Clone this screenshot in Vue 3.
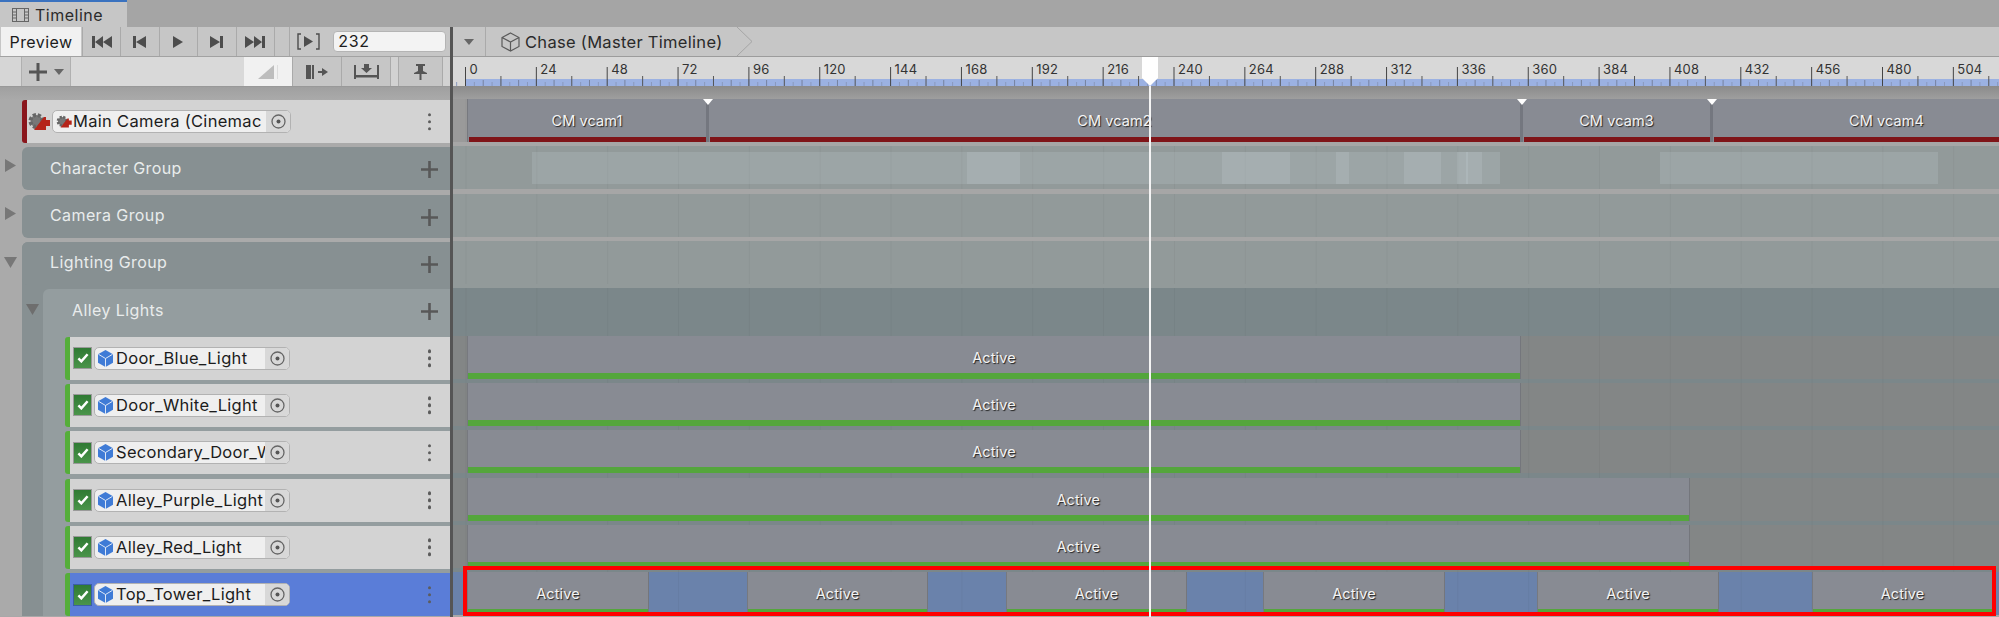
<script setup>
const ORIGIN = 12.5
const PX_PER_FRAME = 70.85 / 24

const frameX = (f) => ORIGIN + f * PX_PER_FRAME
const px = (x) => x - 453

const labels = []
for (let f = 0; f <= 504; f += 24) labels.push(f)

const ticks = []
for (let f = -3; f <= 525; f += 3) {
  let top = 25
  let color = '#8a99bd'
  if (f % 24 === 0) { top = 10; color = '#444' }
  else if (f % 12 === 0) { top = 19; color = '#555' }
  else if (f % 6 === 0) { top = 23; color = '#76829f' }
  ticks.push({ x: frameX(f), top, color })
}

const camClips = [
  { name: 'CM vcam1', from: 467, to: 706, first: true },
  { name: 'CM vcam2', from: 706, to: 1520, marker: true },
  { name: 'CM vcam3', from: 1520, to: 1710, marker: true },
  { name: 'CM vcam4', from: 1710, to: 2060, marker: true },
]

const ghosts = [
  [532, 1500], [1660, 1938],
  [967, 1020], [1222, 1290], [1336, 1349], [1404, 1441], [1457, 1482], [1466, 1468],
]

const lights = [
  { name: 'Door_Blue_Light', clips: [[467, 1521]] },
  { name: 'Door_White_Light', clips: [[467, 1521]] },
  { name: 'Secondary_Door_W', clips: [[467, 1521]] },
  { name: 'Alley_Purple_Light', clips: [[467, 1689.5]] },
  { name: 'Alley_Red_Light', clips: [[467, 1689.5]] },
  {
    name: 'Top_Tower_Light',
    selected: true,
    clips: [[467, 649], [747, 928], [1006, 1187], [1263, 1445], [1537, 1719], [1812, 1993]],
  },
]

const spanStyle = (from, to) => ({ left: px(from) + 'px', width: to - from + 'px' })
</script>

<template>
  <div class="app">
    <div class="tabbar">
      <div class="tab">
        <svg width="17" height="14" viewBox="0 0 17 14" class="film">
          <rect x="0.5" y="0.5" width="16" height="13" fill="none" stroke="#666" />
          <path d="M4.5 0V14M12.5 0V14M0 4H4M0 7H4M0 10H4M13 4H17M13 7H17M13 10H17" stroke="#666" fill="none" />
        </svg>
        <span>Timeline</span>
      </div>
    </div>

    <div class="body">
      <div class="left">
        <div class="tools-a">
          <div class="preview">Preview</div>
          <div class="tbtn">
            <svg width="20" height="12" viewBox="0 0 20 12"><path d="M0 0H3V12H0ZM3 6L11 0V12ZM11 6L20 0V12Z" fill="#4d4d4d" /></svg>
          </div>
          <div class="tbtn">
            <svg width="13" height="12" viewBox="0 0 13 12"><path d="M0 0H3V12H0ZM3 6L13 0V12Z" fill="#4d4d4d" /></svg>
          </div>
          <div class="tbtn">
            <svg width="10" height="12" viewBox="0 0 10 12"><path d="M0 0L10 6L0 12Z" fill="#4d4d4d" /></svg>
          </div>
          <div class="tbtn">
            <svg width="13" height="12" viewBox="0 0 13 12"><path d="M13 0H10V12H13ZM10 6L0 0V12Z" fill="#4d4d4d" /></svg>
          </div>
          <div class="tbtn">
            <svg width="20" height="12" viewBox="0 0 20 12"><path d="M20 0H17V12H20ZM17 6L9 0V12ZM9 6L0 0V12Z" fill="#4d4d4d" /></svg>
          </div>
          <div class="tspacer"></div>
          <div class="tbtn">
            <svg width="23" height="17" viewBox="0 0 23 17"><path d="M4 1H1V16H4M19 1H22V16H19" fill="none" stroke="#4d4d4d" stroke-width="1.4" /><path d="M7 3L16 8.500L7 14Z" fill="#4d4d4d" /></svg>
          </div>
          <div class="frame-input">232</div>
        </div>

        <div class="tools-b">
          <div class="add">
            <svg width="18" height="18" viewBox="0 0 18 18"><path d="M9 0V18M0 9H18" stroke="#555" stroke-width="3" /></svg>
            <svg width="10" height="6" viewBox="0 0 10 6"><path d="M0 0H10L5 6Z" fill="#666" /></svg>
          </div>
          <div class="tfill"></div>
          <div class="slope">
            <svg width="21" height="14" viewBox="0 0 21 14"><path d="M0 14L16 0V14Z" fill="#bdbdbd" /><path d="M19.500 0V14" stroke="#ddd" /></svg>
          </div>
          <div class="bbtn">
            <svg width="22" height="14" viewBox="0 0 22 14"><path d="M0 0H5V14H0ZM6 0H8V14H6ZM12 6H16V3L22 7L16 11V8H12Z" fill="#555" /></svg>
          </div>
          <div class="bbtn">
            <svg width="25" height="15" viewBox="0 0 25 15"><path d="M0 1H2V15H0ZM23 1H25V15H23ZM2 11H23V13.500H2ZM10 0H15V4H18L12.500 9L7 4H10Z" fill="#555" /></svg>
          </div>
          <div class="bgap"></div>
          <div class="bbtn pin">
            <svg width="13" height="16" viewBox="0 0 13 16"><path d="M2 0H11V2H9V7L13 9V10H0V9L4 7V2H2ZM5.500 10H7.500V16H5.500Z" fill="#555" /></svg>
          </div>
          <div class="bend"></div>
        </div>

        <div class="shade-left"></div>

        <div class="tracks">
          <div class="clip-track camera-track">
            <svg class="gear" width="22" height="20" viewBox="0 0 22 20">
              <circle cx="8.500" cy="9" r="6" fill="#777" stroke="#666" stroke-width="4" stroke-dasharray="3 1.800" />
              <path d="M6 18L16 5H18V8H22V14H18V18Z" fill="#b5251a" />
            </svg>
            <div class="field">
              <div class="field-main">
                <svg width="16" height="14" viewBox="0 0 22 20" class="field-icon">
                  <circle cx="8.500" cy="9" r="6" fill="#777" stroke="#666" stroke-width="4" stroke-dasharray="3 1.800" />
                  <path d="M6 18L16 5H18V8H22V14H18V18Z" fill="#b5251a" />
                </svg>
                <span class="field-name">Main Camera (Cinemac</span>
              </div>
              <div class="field-target">
                <svg width="15" height="15" viewBox="0 0 15 15"><circle cx="7.500" cy="7.500" r="6.500" fill="none" stroke="#666" stroke-width="1.300" /><circle cx="7.500" cy="7.500" r="2" fill="#555" /></svg>
              </div>
            </div>
            <div class="dots"><i></i><i></i><i></i></div>
          </div>

          <div class="group">
            <svg class="fold" width="11" height="13" viewBox="0 0 11 13"><path d="M0 0L11 6.500L0 13Z" fill="#777" /></svg>
            <span>Character Group</span>
            <svg class="plus" width="17" height="17" viewBox="0 0 17 17"><path d="M8.500 0V17M0 8.500H17" stroke="#585858" stroke-width="2.600" /></svg>
          </div>

          <div class="group">
            <svg class="fold" width="11" height="13" viewBox="0 0 11 13"><path d="M0 0L11 6.500L0 13Z" fill="#777" /></svg>
            <span>Camera Group</span>
            <svg class="plus" width="17" height="17" viewBox="0 0 17 17"><path d="M8.500 0V17M0 8.500H17" stroke="#585858" stroke-width="2.600" /></svg>
          </div>

          <div class="group-open">
            <div class="group">
              <svg class="fold down" width="13" height="11" viewBox="0 0 13 11"><path d="M0 0H13L6.500 11Z" fill="#777" /></svg>
              <span>Lighting Group</span>
              <svg class="plus" width="17" height="17" viewBox="0 0 17 17"><path d="M8.500 0V17M0 8.500H17" stroke="#585858" stroke-width="2.600" /></svg>
            </div>

            <div class="subgroup">
              <div class="group sub">
                <svg class="fold down" width="13" height="11" viewBox="0 0 13 11"><path d="M0 0H13L6.500 11Z" fill="#6e6e6e" /></svg>
                <span>Alley Lights</span>
                <svg class="plus" width="17" height="17" viewBox="0 0 17 17"><path d="M8.500 0V17M0 8.500H17" stroke="#585858" stroke-width="2.600" /></svg>
              </div>

              <div
                v-for="light in lights"
                :key="light.name"
                class="clip-track light-track"
                :class="{ selected: light.selected }"
              >
                <div class="check">
                  <svg width="12" height="10" viewBox="0 0 14 12"><path d="M1.500 6.500L5 10L12.500 1.500" fill="none" stroke="#fff" stroke-width="3" /></svg>
                </div>
                <div class="field">
                  <div class="field-main">
                    <svg width="15" height="17" viewBox="0 0 16 18" class="cube">
                      <path d="M8 0L16 4.500V13.500L8 18L0 13.500V4.500Z" fill="#3f7bd6" />
                      <path d="M0.500 4.500L8 9L15.500 4.500M8 9V18" fill="none" stroke="#e8eef8" stroke-width="1" />
                    </svg>
                    <span class="field-name">{{ light.name }}</span>
                  </div>
                  <div class="field-target">
                    <svg width="15" height="15" viewBox="0 0 15 15"><circle cx="7.500" cy="7.500" r="6.500" fill="none" stroke="#666" stroke-width="1.300" /><circle cx="7.500" cy="7.500" r="2" fill="#555" /></svg>
                  </div>
                </div>
                <div class="dots"><i></i><i></i><i></i></div>
              </div>
            </div>
          </div>
        </div>
      </div>

      <div class="divider"></div>

      <div class="right">
        <div class="crumbs">
          <div class="crumb-menu">
            <svg width="10" height="6" viewBox="0 0 10 6"><path d="M0 0H10L5 6Z" fill="#666" /></svg>
          </div>
          <div class="crumb">
            <svg width="19" height="20" viewBox="0 0 19 20">
              <path d="M9.500 1L18 5.500V14.500L9.500 19L1 14.500V5.500ZM1 5.500L9.500 10L18 5.500M9.500 10V19" fill="none" stroke="#5a5a5a" stroke-width="1.200" />
            </svg>
            <span>Chase (Master Timeline)</span>
            <svg class="chevron" width="16" height="29" viewBox="0 0 16 29"><path d="M0 0L15 14.500L0 29" fill="none" stroke="#a5a5a5" stroke-width="1" /></svg>
          </div>
        </div>

        <div class="ruler">
          <div class="ruler-band"></div>
          <svg class="ruler-ticks" width="1546" height="29">
            <line
              v-for="t in ticks"
              :key="t.x"
              :x1="t.x"
              :x2="t.x"
              :y1="t.top"
              y2="29"
              :stroke="t.color"
              stroke-width="1"
            />
          </svg>
          <span
            v-for="f in labels"
            :key="f"
            class="ruler-label"
            :style="{ left: frameX(f) + 4 + 'px' }"
          >{{ f }}</span>
        </div>

        <div class="shade-right"></div>

        <div class="lanes">
          <div class="lane cam-lane">
            <div
              v-for="c in camClips"
              :key="c.name"
              class="clip cam"
              :class="{ first: c.first }"
              :style="spanStyle(c.from, c.to)"
            >
              <span>{{ c.name }}</span>
              <i v-if="c.marker" class="marker"></i>
            </div>
          </div>

          <div class="lane group-lane">
            <div
              v-for="(g, i) in ghosts"
              :key="i"
              class="ghost"
              :style="spanStyle(g[0], g[1])"
            ></div>
          </div>

          <div class="lane group-lane"></div>

          <div class="lanes-open">
            <div class="lane group-lane"></div>

            <div class="lanes-alley">
              <div class="lane alley-lane"></div>
              <div
                v-for="light in lights"
                :key="light.name"
                class="lane light-lane"
                :class="{ selected: light.selected }"
              >
                <div
                  v-for="c in light.clips"
                  :key="c[0]"
                  class="clip active"
                  :style="spanStyle(c[0], c[1])"
                >
                  <span>Active</span>
                </div>
              </div>
            </div>
          </div>
        </div>

        <div class="selection-box"></div>

        <div class="playhead">
          <svg width="16" height="29" viewBox="0 0 16 29"><path d="M0 0H16V21L8 29L0 21Z" fill="#fff" /></svg>
          <div class="playhead-line"></div>
        </div>
      </div>
    </div>
  </div>
</template>

<style scoped>
.app {
  width: 1999px;
  height: 617px;
  overflow: hidden;
  display: flex;
  flex-direction: column;
  background: #a8a8a8;
  font-family: Inter, "Noto Sans", sans-serif;
  font-size: 16px;
  color: #1c1c1c;
}

.tabbar {
  height: 27px;
  flex: none;
  display: flex;
  background: #a5a5a5;
}
.tab {
  height: 25px;
  border-top: 2px solid #3a72bf;
  background: #c6c6c6;
  display: flex;
  align-items: center;
  padding-left: 12px;
  gap: 6px;
  color: #2b2b2b;
  letter-spacing: 0.5px;
  width: 115px;
}
.film {
  flex: none;
}

.body {
  flex: 1;
  display: flex;
  position: relative;
  min-height: 0;
}

.left {
  width: 450px;
  flex: none;
  display: flex;
  flex-direction: column;
}

.tools-a {
  height: 30px;
  flex: none;
  display: flex;
  background: #c6c6c6;
  border-bottom: 1px solid #a2a2a2;
  box-sizing: border-box;
}
.preview {
  width: 80px;
  margin-left: 1px;
  background: #f1f1f1;
  display: flex;
  align-items: center;
  justify-content: center;
  margin-right: 1px;
  letter-spacing: 0.4px;
}
.tbtn {
  width: 38px;
  border-left: 1px solid #aaa;
  display: flex;
  align-items: center;
  justify-content: center;
  box-sizing: border-box;
  margin-right: 0.4px;
}
.tspacer {
  width: 15px;
  border-left: 1px solid #aaa;
  box-sizing: border-box;
}
.frame-input {
  width: 113px;
  height: 21px;
  margin: 4px 0 0 6px;
  border-radius: 4px;
  border: 1px solid #b4b4b4;
  background: #f3f3f3;
  box-sizing: border-box;
  padding-left: 4px;
  line-height: 19px;
  font-size: 16px;
  letter-spacing: 0.6px;
}

.tools-b {
  height: 30px;
  flex: none;
  display: flex;
  background: #d6d6d6;
  border-bottom: 1px solid #999;
  box-sizing: border-box;
}
.add {
  width: 50px;
  margin-left: 21px;
  background: #c6c6c6;
  border-left: 1px solid #b0b0b0;
  border-right: 1px solid #b0b0b0;
  box-sizing: border-box;
  display: flex;
  align-items: center;
  gap: 7px;
  padding-left: 7px;
}
.tfill {
  width: 173px;
  background: #d9d9d9;
}
.slope {
  width: 48px;
  background: #f1f1f1;
  display: flex;
  align-items: center;
  justify-content: flex-end;
  padding-right: 13px;
  box-sizing: border-box;
}
.bbtn {
  width: 49px;
  background: #c6c6c6;
  border-left: 1px solid #aaa;
  box-sizing: border-box;
  display: flex;
  align-items: center;
  justify-content: center;
}
.bgap {
  width: 8px;
  background: #d2d2d2;
  border-left: 1px solid #aaa;
  box-sizing: border-box;
}
.pin {
  width: 44px;
}
.bend {
  flex: 1;
  background: #d2d2d2;
  border-left: 1px solid #aaa;
}

.shade-left {
  height: 13px;
  flex: none;
  background: linear-gradient(#a0a0a0, #aaaaaa);
}

.tracks {
  display: flex;
  flex-direction: column;
  gap: 4.33px;
  background: #aaaaaa;
}

.clip-track {
  height: 43px;
  flex: none;
  margin-left: 22px;
  background: #d3d3d3;
  border-left: 5px solid #8a161c;
  border-radius: 3px 0 0 3px;
  box-sizing: border-box;
  display: flex;
  align-items: center;
  position: relative;
}
.gear {
  margin-left: 1px;
  flex: none;
}
.field {
  margin-left: 2px;
  width: 239px;
  height: 23px;
  flex: none;
  display: flex;
  border: 1px solid #b2b2b2;
  border-radius: 5px;
  box-sizing: border-box;
  overflow: hidden;
  background: #efefef;
}
.field-main {
  width: 213px;
  flex: none;
  display: flex;
  align-items: center;
  overflow: hidden;
  padding-left: 3px;
  box-sizing: border-box;
}
.field-icon,
.cube {
  flex: none;
  margin-right: 3px;
}
.field-icon {
  margin-right: 1px;
}
.field-name {
  white-space: nowrap;
  font-size: 16.5px;
  letter-spacing: 0.3px;
  line-height: 21px;
}
.field-target {
  flex: 1;
  background: #d8d8d8;
  display: flex;
  align-items: center;
  justify-content: center;
}
.dots {
  position: absolute;
  right: 19px;
  top: 50%;
  transform: translateY(-50%);
  display: flex;
  flex-direction: column;
  gap: 3.5px;
}
.dots i {
  display: block;
  width: 3.500px;
  height: 3.500px;
  border-radius: 50%;
  background: #5c5c5c;
}

.group {
  height: 43px;
  flex: none;
  margin-left: 22px;
  background: #879092;
  border-radius: 6px 0 0 6px;
  display: flex;
  align-items: center;
  padding-left: 28px;
  color: #e9ecec;
  letter-spacing: 0.4px;
  position: relative;
}
.group > span {
  margin-top: -2px;
}
.fold {
  position: absolute;
  left: -17px;
  top: 12px;
}
.fold.down {
  left: -18px;
  top: 15px;
}
.plus {
  position: absolute;
  right: 12px;
  top: 14px;
}
.group-open {
  margin-left: 22px;
  background: #879092;
  border-radius: 6px 0 0 0;
  display: flex;
  flex-direction: column;
  gap: 4.33px;
}
.group-open > .group {
  margin-left: 0;
}
.subgroup {
  margin-left: 21px;
  background: #949d9f;
  border-radius: 6px 0 0 0;
  display: flex;
  flex-direction: column;
  gap: 4.33px;
}
.group.sub {
  margin-left: 0;
  background: transparent;
  padding-left: 29px;
}
.sub .fold.down {
  left: -17px;
}
.light-track {
  margin-left: 22px;
  border-left-color: #55ae3a;
}
.light-track.selected {
  background: #5a7dd8;
}
.check {
  width: 19px;
  height: 22px;
  margin-left: 3px;
  flex: none;
  background: linear-gradient(#2f7a33, #4a944a);
  border: 1px solid #9a9a9a;
  box-sizing: border-box;
  display: flex;
  align-items: center;
  justify-content: center;
}
.selected .check {
  border-color: #3b5ea8;
}
.light-track .field {
  width: 196px;
  margin-left: 2px;
}
.light-track .field-main {
  width: 170px;
}

.divider {
  width: 3px;
  flex: none;
  background: #555;
}

.right {
  flex: 1;
  min-width: 0;
  display: flex;
  flex-direction: column;
  position: relative;
}

.crumbs {
  height: 30px;
  flex: none;
  display: flex;
  background: #c6c6c6;
  border-bottom: 1px solid #9c9c9c;
  box-sizing: border-box;
}
.crumb-menu {
  width: 33px;
  border-right: 1px solid #aaa;
  display: flex;
  align-items: center;
  justify-content: center;
  box-sizing: border-box;
}
.crumb {
  display: flex;
  align-items: center;
  gap: 5px;
  padding-left: 15px;
  width: 252px;
  position: relative;
  font-size: 16.5px;
  letter-spacing: 0.3px;
  color: #2a2a2a;
}
.chevron {
  position: absolute;
  left: 251px;
  top: 0;
}

.ruler {
  height: 29px;
  flex: none;
  position: relative;
  background: #d8d8d8;
}
.ruler-band {
  position: absolute;
  left: 12px;
  right: 0;
  bottom: 0;
  height: 7px;
  background: #9bb1e2;
}
.ruler-ticks {
  position: absolute;
  left: 0;
  top: 0;
}
.ruler-label {
  position: absolute;
  top: 2px;
  font-size: 13px;
  line-height: 20px;
  color: #333;
  letter-spacing: 0.2px;
}

.shade-right {
  height: 13px;
  flex: none;
  background: linear-gradient(#8b8b8b, #9e9e9e);
}

.lanes {
  display: flex;
  flex-direction: column;
  gap: 4.33px;
  background: #a6a6a6;
}
.lanes-open {
  display: flex;
  flex-direction: column;
  gap: 4.33px;
  background: #929a9a;
}
.lanes-alley {
  display: flex;
  flex-direction: column;
  gap: 4.33px;
  background-color: #7b878a;
  background-image: linear-gradient(90deg, rgba(0, 0, 0, 0.035) 1px, transparent 1px);
  background-size: 70.85px 100%;
  background-position: 12.500px 0;
}
.lane {
  height: 43px;
  flex: none;
  position: relative;
  background-color: #929a9a;
  background-image: linear-gradient(90deg, rgba(0, 0, 0, 0.04) 1px, transparent 1px);
  background-size: 70.85px 100%;
  background-position: 12.500px 0;
}
.cam-lane {
  background-color: #9a9a9a;
}
.alley-lane {
  background-color: #7b878a;
}
.light-lane {
  background-color: #838686;
}
.light-lane.selected {
  background-color: #6a82ab;
}

.ghost {
  position: absolute;
  top: 6px;
  height: 32px;
  background: rgba(220, 232, 240, 0.14);
}

.clip {
  position: absolute;
  top: 0;
  bottom: 0;
  background: #888b93;
  display: flex;
  align-items: center;
  justify-content: center;
  box-sizing: border-box;
  color: #f4f4f4;
  font-size: 14.500px;
  letter-spacing: 0.1px;
  text-shadow: 1px 1px 1px #222;
  white-space: nowrap;
}
.clip::after {
  content: "";
  position: absolute;
  left: 0;
  right: 0;
  bottom: 0;
  height: 5px;
}
.clip.active {
  border-left: 1px solid #77797f;
  border-right: 1px solid #74767c;
}
.clip.active::after {
  background: #54a63c;
  height: 6px;
}
.clip.cam {
  border-left: 3px solid #74777f;
}
.clip.cam.first {
  border-left: 1px solid #77797f;
}
.clip.cam::after {
  background: #7f1418;
  left: 1px;
}
.marker {
  position: absolute;
  left: -6.500px;
  top: 0;
  width: 0;
  height: 0;
  border-left: 5px solid transparent;
  border-right: 5px solid transparent;
  border-top: 6px solid #fff;
}

.selection-box {
  position: absolute;
  left: 10px;
  top: 539px;
  width: 1533px;
  height: 50px;
  border: 4px solid #f00;
  box-sizing: border-box;
}

.playhead {
  position: absolute;
  left: 689px;
  top: 30px;
  bottom: 0;
  width: 16px;
  display: flex;
  flex-direction: column;
  align-items: center;
}
.playhead svg {
  flex: none;
  display: block;
}
.playhead-line {
  flex: 1;
  width: 2px;
  background: #f4f4f4;
}
</style>

<style>
html,
body {
  margin: 0;
  background: #a8a8a8;
}
</style>
